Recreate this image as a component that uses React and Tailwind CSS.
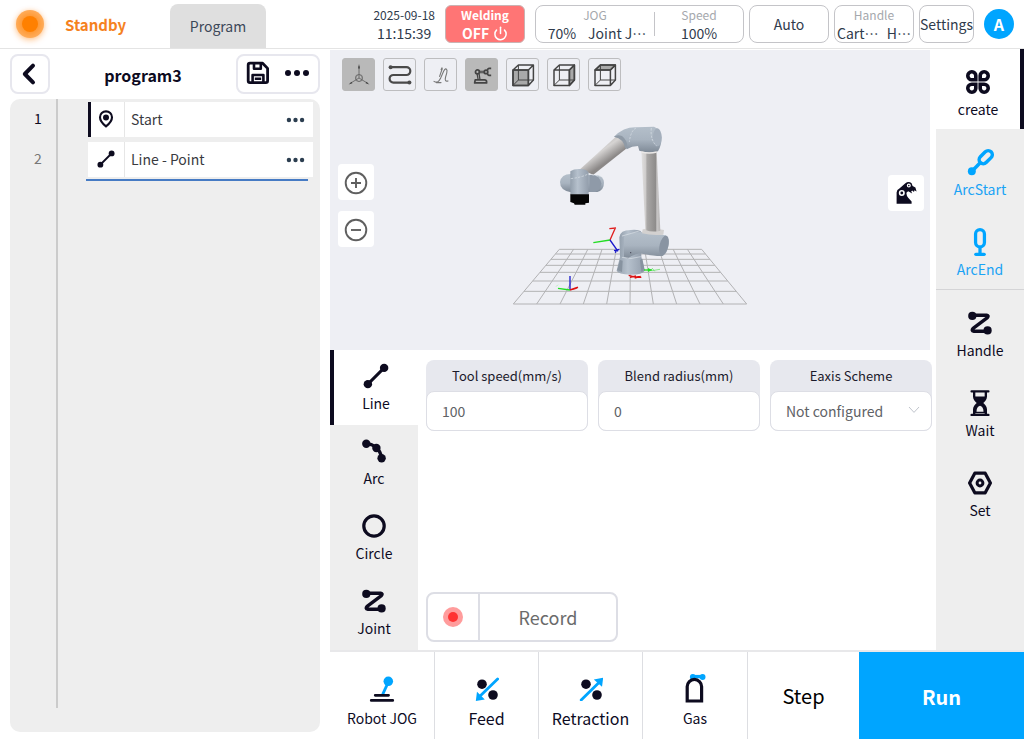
import { useState } from "react";
import clsx from "clsx";
import { Power } from "lucide-react";

const INK = "#0d0b1f";
const BLUE = "#00a5ff";

/* ---------- icons ---------- */

const Svg = ({ size = 24, children, ...rest }) => (
  <svg width={size} height={size} viewBox="0 0 24 24" fill="none" aria-hidden="true" {...rest}>
    {children}
  </svg>
);

const LineIcon = ({ size = 26 }) => (
  <Svg size={size}>
    <path d="M4.5 19.5 19.5 4.5" stroke={INK} strokeWidth="2.8" />
    <circle cx="4.5" cy="19.5" r="3.9" fill={INK} />
    <circle cx="19.5" cy="4.5" r="3.9" fill={INK} />
  </Svg>
);

const ArcIcon = () => (
  <Svg>
    <path d="M4.3 4.7C10 5 18 8 19.6 19.3" stroke={INK} strokeWidth="3.4" />
    <circle cx="4.3" cy="4.7" r="4.2" fill={INK} />
    <circle cx="14.4" cy="9" r="4.2" fill={INK} />
    <circle cx="19.6" cy="19.3" r="4.2" fill={INK} />
  </Svg>
);

const CircleIcon = () => (
  <Svg>
    <circle cx="12" cy="12" r="10.2" stroke={INK} strokeWidth="3.2" />
  </Svg>
);

const ZigzagIcon = () => (
  <Svg>
    <path
      d="M4.3 4.2H18.6Q21.2 4.8 19.4 6.7L5.1 17.4Q3 20 5.8 20.2H19.6"
      stroke={INK}
      strokeWidth="3.4"
      strokeLinejoin="round"
    />
    <circle cx="4.3" cy="4.9" r="4.1" fill={INK} />
    <circle cx="19.6" cy="19.4" r="4.1" fill={INK} />
  </Svg>
);

const CreateIcon = () => (
  <Svg stroke={INK} strokeWidth="3.6">
    <path d="M9.8 9.8V6A4 4 0 1 0 6 9.8Z" />
    <path d="M14.2 9.8V6A4 4 0 1 1 18 9.8Z" />
    <path d="M9.8 14.2V18A4 4 0 1 1 6 14.2Z" />
    <path d="M14.2 14.2V18A4 4 0 1 0 18 14.2Z" />
  </Svg>
);

const ArcStartIcon = () => (
  <Svg size={28} stroke={BLUE} strokeWidth="3">
    <rect x="10.4" y="4.4" width="13" height="7" rx="3.5" transform="rotate(-45 16.9 7.9)" />
    <path d="M12.4 12.4 5.5 19.5" />
    <circle cx="5" cy="20" r="3.4" fill={BLUE} stroke="none" />
  </Svg>
);

const ArcEndIcon = () => (
  <Svg size={28} stroke={BLUE} strokeWidth="2.8">
    <rect x="8.2" y="1.4" width="7.6" height="14.8" rx="3.8" />
    <path d="M12 16.2V22.4" />
    <path d="M8.4 22.6H15.6" strokeLinecap="round" />
  </Svg>
);

const WaitIcon = () => (
  <Svg size={28}>
    <path d="M4.8 2H19.2M4.8 22.2H19.2" stroke={INK} strokeWidth="2" strokeLinecap="round" />
    <path
      d="M7 2V6.6Q7.2 9.4 10.8 12Q7.2 14.6 7 17.4V22M17 2V6.6Q16.8 9.4 13.2 12Q16.8 14.6 17 17.4V22"
      stroke={INK}
      strokeWidth="2"
    />
    <path d="M7 6.4H17Q16.6 9.8 13 12H11Q7.4 9.8 7 6.4Z" fill={INK} />
    <path d="M7 18Q7.4 14.4 11 12H13Q16.6 14.4 17 18V20.8H7ZM12 14.4Q9 15.2 9 19.4H15Q15 15.2 12 14.4Z" fill={INK} fillRule="evenodd" />
  </Svg>
);

const SetIcon = () => (
  <Svg>
    <path d="M6.8 2.2H17.2L22.4 12 17.2 21.8H6.8L1.6 12Z" stroke={INK} strokeWidth="3.2" strokeLinejoin="round" />
    <circle cx="12" cy="12" r="2.9" stroke={INK} strokeWidth="3" />
  </Svg>
);

const JogIcon = () => (
  <Svg size={28}>
    <path d="M12.6 16.6 17 7" stroke={BLUE} strokeWidth="2.4" />
    <circle cx="17.4" cy="5.4" r="4.1" fill={BLUE} />
    <path d="M6.2 17.4H17.6M2.8 21.8H21.2" stroke={INK} strokeWidth="2.4" strokeLinecap="round" />
  </Svg>
);

const FeedIcon = ({ out }) => (
  <Svg>
    <circle cx="7" cy="7.2" r="4.8" fill={INK} />
    <circle cx="18" cy="18" r="4.8" fill={INK} />
    {out ? (
      <>
        <path d="M2.2 23 20 5.4" stroke={BLUE} strokeWidth="2.8" strokeLinecap="round" />
        <path d="M14.8 2.6 24.2.8 23 9.8Z" fill={BLUE} />
      </>
    ) : (
      <>
        <path d="M22.6 2 4.6 19.6" stroke={BLUE} strokeWidth="2.8" strokeLinecap="round" />
        <path d="M9.8 22.4.8 24 2 14.8Z" fill={BLUE} />
      </>
    )}
  </Svg>
);

const GasIcon = () => (
  <svg width="24" height="30" viewBox="0 0 24 30" fill="none" aria-hidden="true">
    <path d="M9 2.6H19.5" stroke={BLUE} strokeWidth="3.4" />
    <circle cx="9.8" cy="3" r="2.9" fill={BLUE} />
    <circle cx="19.6" cy="3" r="2.9" fill={BLUE} />
    <path d="M4.2 27V12.6A7.2 7.2 0 0 1 18.6 12.6V27Z" stroke={INK} strokeWidth="3.2" />
  </svg>
);

const BackIcon = () => (
  <Svg>
    <path d="M15 3.6 6.8 12 15 20.4" stroke={INK} strokeWidth="4" strokeLinecap="round" strokeLinejoin="round" />
  </Svg>
);

const SaveIcon = () => (
  <Svg stroke={INK} strokeWidth="2.8" strokeLinejoin="round">
    <path d="M4 2.2H16.6L21.6 7.4V19.8Q21.6 21.6 19.8 21.6H4Q2.2 21.6 2.2 19.8V4Q2.2 2.2 4 2.2Z" />
    <path d="M8 2.6V7.8H14.8V2.6" strokeWidth="2.6" />
    <path d="M6.6 21.4V14H17.4V21.4M8.8 17.8H15.2" strokeWidth="2.6" />
  </Svg>
);

const Dots = ({ color = INK, width = 26 }) => (
  <svg width={width} height="8" viewBox="0 0 26 8" fill={color} aria-hidden="true">
    <circle cx="4" cy="4" r="3" />
    <circle cx="13" cy="4" r="3" />
    <circle cx="22" cy="4" r="3" />
  </svg>
);

const PinIcon = () => (
  <Svg size={18}>
    <path d="M12 21.8Q4 15.6 4 9.6A8 7.8 0 0 1 20 9.6Q20 15.6 12 21.8Z" stroke={INK} strokeWidth="2.8" />
    <circle cx="12" cy="10" r="4" fill={INK} />
  </Svg>
);

const GripperIcon = () => (
  <Svg size={24}>
    <path
      fill={INK}
      fillRule="evenodd"
      d="M2.6 22.8V11.4Q2.8 8.6 5.4 7.4L11.4 2.2Q14.6-.4 17.6 2.2L18.6 5 21.4 6.4 22.6 10.4 20.4 9.2 20 11 18.2 9.6 17.2 10.6 18.2 12.6 14.2 10.2 12.6 11.4Q12 13.6 14.2 16.8L17.6 20.4V22.8ZM7.8 9A3 3 0 1 0 7.8 15 3 3 0 1 0 7.8 9ZM14.8 2.6A2 2 0 1 0 14.8 6.6 2 2 0 1 0 14.8 2.6Z"
    />
    <circle cx="7.8" cy="12" r="1.4" fill={INK} />
    <circle cx="14.8" cy="4.6" r=".8" fill={INK} />
  </Svg>
);

const AxesIcon = () => (
  <Svg stroke="#666" strokeWidth=".9">
    <path d="M12 15V3M12 15 3 20.5M12 15 21 20.5" />
    <circle cx="12" cy="15" r="3.6" strokeWidth=".7" />
    <path d="M12 11.4 15 13.2V16.8L12 18.6 9 16.8V13.2Z" strokeWidth=".6" />
    <path d="M12 1 13 5.6H11ZM1.6 21.4 4.6 18.8 5.4 20.2ZM22.4 21.4 19.4 18.8 18.6 20.2Z" fill="#444" stroke="none" />
  </Svg>
);

const PathIcon = () => (
  <Svg stroke="#4a4a4a" strokeWidth="2.2">
    <path d="M3 4.2H18.4A3.9 3.9 0 0 1 18.4 12H5.4A3.6 3.6 0 0 0 5.4 19.6H21" />
    <circle cx="2.6" cy="4.2" r="2" fill="#4a4a4a" stroke="none" />
    <circle cx="21.4" cy="19.6" r="2" fill="#4a4a4a" stroke="none" />
  </Svg>
);

const TraceIcon = () => (
  <Svg stroke="#777" strokeWidth="1.1" strokeLinecap="round">
    <path d="M5 18.4Q9 20.8 11.4 15.6L14.6 8.2Q17 4 18 7.4Q18.2 9.6 16.6 14Q15.2 19 19 18" />
    <path d="M13 6.4 10.6 13.4M7.4 19.6H12" />
    <path d="M13 5.2 12.4 6.6" strokeWidth="1.6" />
  </Svg>
);

const ArmIcon = () => (
  <Svg size={22} stroke="#444" strokeWidth="1.9" strokeLinejoin="round">
    <path d="M4.6 17.4H14.6Q17 17.4 17 19.4V20.6H4Z" />
    <path d="M7.8 17 6.6 10.4M9.8 17 8.8 10.4" strokeWidth="1.4" />
    <circle cx="7" cy="8.6" r="2.1" />
    <path d="M9.2 8H14.6M9.2 9.6H14.6" strokeWidth="1.1" />
    <circle cx="16.4" cy="8.6" r="1.9" />
    <path d="M22 4.8H19.6Q18 5.2 18 6.8M22 12.4H19.6Q18 12 18 10.4" />
  </Svg>
);

const CubeIcon = ({ face }) => (
  <svg width="26" height="26" viewBox="0 0 26 26" fill="none" stroke="#444" strokeWidth="1.5" strokeLinejoin="round" aria-hidden="true">
    {face === "front" && <path d="M3 8H18.4V23.4H3Z" fill="#a9a9a9" />}
    {face === "side" && <path d="M18.4 8 23.4 3V18L18.4 23.4Z" fill="#a9a9a9" />}
    {face === "top" && <path d="M3 8 8.4 3H23.4L18.4 8Z" fill="#a9a9a9" />}
    <path d="M3 8H18.4V23.4H3ZM3 8 8.4 3H23.4L18.4 8M23.4 3V18L18.4 23.4" />
    <path d="M8.4 3V18H23.4M8.4 18 3 23.4" strokeWidth="1" />
  </svg>
);

/* ---------- 3d scene ---------- */

const GRID_ROWS = [418, 432, 448, 466, 487, 513, 544, 582];
const GRID_COLS = Array.from({ length: 11 }, (_, i) => i);

// left and right edge of the floor at a given depth
const floorEdge = (y) => {
  const t = (y - 418) / 164;
  return [178 - 138 * t, 605 + 135 * t];
};

const RobotScene = () => (
  <svg className="block h-full w-full" viewBox="-510 -180 1800 900" role="img" aria-label="Robot view">
    <defs>
      <linearGradient id="upright" x1="0" x2="1">
        <stop offset="0" stopColor="#e2e1e1" />
        <stop offset=".22" stopColor="#cfcdcc" />
        <stop offset=".3" stopColor="#a9a7a6" />
        <stop offset=".75" stopColor="#8e8c8b" />
        <stop offset=".82" stopColor="#c8c6c6" />
        <stop offset="1" stopColor="#b5b3b3" />
      </linearGradient>
      <linearGradient id="boom" gradientUnits="userSpaceOnUse" x1="288" y1="110" x2="320" y2="156">
        <stop offset="0" stopColor="#bfbdbc" />
        <stop offset=".35" stopColor="#d6d4d3" />
        <stop offset="1" stopColor="#8b8887" />
      </linearGradient>
      <linearGradient id="joint" x1="0" y1="0" x2="0" y2="1">
        <stop offset="0" stopColor="#b4bfca" />
        <stop offset=".5" stopColor="#a9b4c0" />
        <stop offset="1" stopColor="#7f8a97" />
      </linearGradient>
      <linearGradient id="jointSide" x1="0" x2="1">
        <stop offset="0" stopColor="#939fac" />
        <stop offset=".4" stopColor="#b6c1cd" />
        <stop offset="1" stopColor="#929dab" />
      </linearGradient>
    </defs>

    {/* floor */}
    <g stroke="#b2b2b4" strokeWidth="3">
      {GRID_ROWS.map((y) => {
        const [left, right] = floorEdge(y);
        return <line key={y} x1={left} x2={right} y1={y} y2={y} />;
      })}
      {GRID_COLS.map((i) => (
        <line key={i} x1={178 + i * 42.7} y1="418" x2={40 + i * 70} y2="582" />
      ))}
    </g>

    {/* base */}
    <path d="M360 440H424L434 482Q428 494 392 494Q354 492 350 482Z" fill="url(#jointSide)" />
    <path d="M360 450 352 480 366 486 368 452ZM420 450 424 486 434 480 427 446Z" fill="#8793a0" />
    <path d="M358 382Q360 360 392 360Q420 358 424 366V440Q390 452 360 440Z" fill="url(#jointSide)" />
    <path d="M372 380Q396 366 424 366L470 372 496 376Q508 384 506 404Q502 430 488 438Q470 440 418 430Q394 436 384 446L372 440Z" fill="url(#joint)" />
    <ellipse cx="492" cy="406" rx="13" ry="30" transform="rotate(14 492 406)" fill="#8994a2" />
    <path d="M366 442Q392 450 422 440" stroke="#dce2e8" strokeWidth="2" fill="none" />
    <path d="M366 378Q396 370 420 362" stroke="#dce2e8" strokeWidth="2" fill="none" />
    <circle cx="392" cy="428" r="2" fill="#445" />

    {/* upright */}
    <path d="M428 358Q460 352 492 360L490 374Q458 378 426 370Z" fill="#d3d1d0" />
    <path d="M424 122H470L481 362Q458 368 436 360Z" fill="url(#upright)" />

    {/* boom */}
    <path d="M240 178 350 78Q378 82 384 112L280 194Z" fill="url(#boom)" />
    <path d="M342 80Q372 50 410 52L462 50Q484 58 485 84Q484 108 474 124Q444 130 418 122L414 108Q396 108 380 118Q382 88 342 80Z" fill="url(#joint)" />
    <path d="M342 80Q352 72 366 78Q384 92 382 114L376 116Q372 86 342 80Z" fill="#8f9aa6" />
    <ellipse cx="472" cy="82" rx="13" ry="27" fill="#a4afbc" />
    <path d="M408 54Q392 62 388 96M454 54Q450 90 470 108" stroke="#dce2e8" strokeWidth="2" strokeDasharray="7 4" fill="none" />
    <path d="M424 126Q448 132 470 126" stroke="#ebe9e8" strokeWidth="4" fill="none" />

    {/* wrist */}
    <path d="M212 192Q184 192 180 216Q180 240 210 246H292Q312 240 312 218Q310 198 292 196Z" fill="url(#joint)" />
    <path d="M274 194Q300 196 304 220Q302 240 286 246H268V196Z" fill="#8f9aa8" />
    <path d="M211 184Q222 176 240 177Q262 178 266 188V254H211Z" fill="url(#jointSide)" />
    <path d="M212 206Q246 202 264 192L306 200" stroke="#dce2e8" strokeWidth="2" strokeDasharray="7 4" fill="none" />
    <path d="M211 253H267V278L256 280V284H224L222 280 211 276Z" fill="#050505" />

    {/* axis markers */}
    <g fill="none" strokeWidth="4">
      <path d="M330 390 346 354M328 356 348 354" stroke="#e01e1e" />
      <path d="M330 390 280 398" stroke="#22dd22" />
      <path d="M330 390 354 424M342 422 358 418M346 428 350 418" stroke="#1a1acc" />
      <path d="M210 540V498" stroke="#1a1acc" />
      <path d="M210 540 174 535" stroke="#22dd22" />
      <path d="M210 540 234 532M218 538 230 534" stroke="#d11" strokeWidth="5" />
      <path d="M168 530 174 524" stroke="#a8e8a8" strokeWidth="2" />
      <path d="M432 480H456" stroke="#22dd22" />
      <path d="M444 474 456 480 444 486Z" fill="#22dd22" />
      <path d="M456 474 464 484M456 482 480 478" stroke="#55e055" strokeWidth="2" />
      <path d="M386 496 400 500 424 502M390 502 408 498M404 504 422 499" stroke="#d11" />
    </g>
  </svg>
);

/* ---------- data ---------- */

const VIEW_TOOLS = [
  { name: "Axes", icon: <AxesIcon />, on: true },
  { name: "Path", icon: <PathIcon /> },
  { name: "Trace", icon: <TraceIcon /> },
  { name: "Robot model", icon: <ArmIcon />, on: true },
  { name: "Front view", icon: <CubeIcon face="front" /> },
  { name: "Side view", icon: <CubeIcon face="side" /> },
  { name: "Top view", icon: <CubeIcon face="top" /> },
];

const MOTIONS = [
  { name: "Line", icon: <LineIcon /> },
  { name: "Arc", icon: <ArcIcon /> },
  { name: "Circle", icon: <CircleIcon /> },
  { name: "Joint", icon: <ZigzagIcon /> },
];

const RAIL = [
  { name: "create", icon: <CreateIcon /> },
  { name: "ArcStart", icon: <ArcStartIcon />, blue: true },
  { name: "ArcEnd", icon: <ArcEndIcon />, blue: true, divider: true },
  { name: "Handle", icon: <ZigzagIcon /> },
  { name: "Wait", icon: <WaitIcon /> },
  { name: "Set", icon: <SetIcon /> },
];

const ACTIONS = [
  { name: "Robot JOG", icon: <JogIcon />, text: "text-sm" },
  { name: "Feed", icon: <FeedIcon />, text: "text-base" },
  { name: "Retraction", icon: <FeedIcon out />, text: "text-base" },
  { name: "Gas", icon: <GasIcon />, text: "text-sm" },
];

const STEPS = [
  { name: "Start", icon: <PinIcon />, current: true },
  { name: "Line - Point", icon: <LineIcon size={18} /> },
];

/* ---------- sections ---------- */

// the JP cut of the font sets the ellipsis at mid height
const boxStyle =
  "h-[38px] rounded-lg border border-[#c4c4c8] bg-white text-sm whitespace-nowrap text-[#2f3b4c] font-['Noto_Sans_CJK_JP','Noto_Sans',sans-serif]";

const Header = () => (
  <header className="flex h-[49px] shrink-0 items-center border-b border-[#e4e4e4]">
    <div className="ml-4 flex h-7 w-7 items-center justify-center rounded-full bg-[#ffb061] shadow-[0_2px_6px_rgba(255,128,0,0.4)]">
      <span className="h-4 w-4 rounded-full bg-[#ff8000] shadow-[0_0_6px_3px_rgba(255,128,0,0.55)]" />
    </div>
    <span className="ml-5 w-[106px] pt-0.5 pl-px text-[15px] font-bold text-[#f5821f]">Standby</span>
    <button className="h-11 w-24 self-end rounded-t-lg bg-[#dfdfdf] text-sm text-[#3c4858]">Program</button>

    <div className="ml-auto flex items-center gap-[5px] pr-[10px]">
      <div className="mr-[5px] text-center text-[#2f3b4c]">
        <div className="text-xs leading-[18px]">2025-09-18</div>
        <div className="text-sm leading-[18px]">11:15:39</div>
      </div>
      <button className="mr-[5px] flex h-[38px] w-20 flex-col items-center justify-center rounded-md border border-[#c9b3b3] bg-[#ff7575] font-bold text-white">
        <span className="text-xs leading-[18px]">Welding</span>
        <span className="flex items-center gap-1 text-sm leading-[18px]">
          OFF <Power size={15} strokeWidth={2.4} />
        </span>
      </button>
      <div className={clsx(boxStyle, "flex w-[209px] items-center text-center leading-[18px]")}>
        <button className="w-[118px]">
          <div className="text-xs leading-[18px] text-[#a5a8ad]">JOG</div>
          <div className="flex justify-center gap-3 pl-1">
            <span>70%</span>
            <span lang="ja">Joint J…</span>
          </div>
        </button>
        <div className="h-6 border-l border-[#c4c4c8]" />
        <button className="flex-1">
          <div className="text-xs leading-[18px] text-[#a5a8ad]">Speed</div>
          <div>100%</div>
        </button>
      </div>
      <button className={clsx(boxStyle, "w-20")}>Auto</button>
      <button className={clsx(boxStyle, "w-20 leading-[18px]")}>
        <div className="text-xs leading-[18px] text-[#a5a8ad]">Handle</div>
        <div className="flex justify-between px-0.5" lang="ja">
          <span>Cart…</span>
          <span>H…</span>
        </div>
      </button>
      <button className={clsx(boxStyle, "flex w-[55px] items-center justify-center")}>Settings</button>
      <button className="ml-[5px] h-[30px] w-[30px] rounded-full bg-[#00a5ff] text-base font-bold text-white">A</button>
    </div>
  </header>
);

const ProgramPanel = () => (
  <aside className="flex w-[330px] shrink-0 flex-col px-[10px] pt-[5px] pb-[7px]">
    <div className="flex h-10 shrink-0 items-center justify-between">
      <button aria-label="Back" className="flex h-10 w-10 items-center justify-center rounded-lg border-2 border-[#e7e7ee]">
        <BackIcon />
      </button>
      <h1 className="pt-0.5 text-base font-bold text-[#0d0b1f]">program3</h1>
      <div className="flex h-10 items-center gap-[14px] rounded-lg border-2 border-[#e7e7ee] px-2 pb-0.5">
        <button aria-label="Save"><SaveIcon /></button>
        <button aria-label="More"><Dots /></button>
      </div>
    </div>

    <div className="mt-[5px] flex flex-1 rounded-[10px] bg-[#eeeeee] pr-[7px]">
      <div className="mb-6 w-12 border-r-2 border-[#cbcbcb] pt-[3px] pl-[10px] text-center text-sm">
        <div className="h-[35px] leading-[33px] text-[#0d0b1f]">1</div>
        <div className="mt-[5px] h-[35px] leading-[33px] text-[#777]">2</div>
      </div>
      <div className="ml-7 flex-1 pt-[3px]">
        <ol className="ml-0.5 flex flex-col gap-[5px]">
          {STEPS.map((step) => (
            <li
              key={step.name}
              className={clsx("flex h-[35px] items-center bg-white", step.current && "border-l-3 border-[#0d0b1f]")}
            >
              <span
                className={clsx(
                  "flex h-full items-center justify-center border-r border-[#e6e6e6] pb-px",
                  step.current ? "w-[34px] pr-[3px]" : "w-[37px]"
                )}
              >
                {step.icon}
              </span>
              <span className="flex-1 pb-0.5 pl-1.5 text-sm text-[#3a3a3f]">{step.name}</span>
              <button aria-label={`${step.name} options`} className="mr-2">
                <Dots color="#2c3e50" width={19} />
              </button>
            </li>
          ))}
        </ol>
        <div className="mt-0.5 mr-[5px] h-0.5 bg-[#467bc4]" />
      </div>
    </div>
  </aside>
);

const roundTile = "flex h-9 w-9 items-center justify-center rounded bg-white";

const Viewport = () => (
  <div className="relative mt-px mr-1.5 min-h-0 flex-1 bg-[#eeeff4]">
    <RobotScene />
    <div className="absolute top-2 left-3 flex gap-2">
      {VIEW_TOOLS.map((tool) => (
        <button
          key={tool.name}
          aria-label={tool.name}
          className={clsx(
            "flex h-[33px] w-[33px] items-center justify-center rounded-[3px] border pt-px",
            tool.on ? "border-[#b9b9b9] bg-[#b9b9b9]" : "border-[#bdbdbf]"
          )}
        >
          {tool.icon}
        </button>
      ))}
    </div>
    <div className="absolute top-[114px] left-2 flex flex-col gap-[11px]">
      {["M7 12H17M12 7V17", "M7 12H17"].map((d, i) => (
        <button key={d} aria-label={i ? "Zoom out" : "Zoom in"} className={clsx(roundTile, "pt-0.5")}>
          <Svg stroke="#5f5f5f" strokeWidth="1.9">
            <circle cx="12" cy="12" r="10.3" />
            <path d={d} />
          </Svg>
        </button>
      ))}
    </div>
    <button aria-label="Robot pose" className={clsx(roundTile, "absolute top-[125px] right-1.5")}>
      <GripperIcon />
    </button>
  </div>
);

const Field = ({ id, label, children }) => (
  <div className="h-[71px] flex-1 rounded-lg bg-[#e7e8ee]">
    <label htmlFor={id} className="block h-[31px] text-center text-[13px] leading-[31px] text-[#1b1a2b]">
      {label}
    </label>
    <div className="relative">{children}</div>
  </div>
);

const inputStyle = "block h-10 w-full appearance-none rounded-lg border border-[#dddee5] bg-white px-[15px] text-sm text-[#606266] outline-none";

const MotionEditor = () => {
  const [motion, setMotion] = useState("Line");

  return (
    <div className="flex h-[300px] shrink-0">
      <nav className="w-[88px] bg-[#eeeeee]">
        {MOTIONS.map((m) => (
          <button
            key={m.name}
            onClick={() => setMotion(m.name)}
            className={clsx(
              "flex h-[75px] w-full flex-col items-center pt-[13px] text-[#0d0b1f]",
              m.name === motion && "border-l-4 border-[#0d0b1f] bg-white"
            )}
          >
            <span className="flex h-[26px] items-center">{m.icon}</span>
            <span className="mt-1 text-sm leading-5">{m.name}</span>
          </button>
        ))}
      </nav>
      <div className="flex flex-1 flex-col justify-between pt-[10px] pr-1 pb-2 pl-2">
        <div className="flex gap-[10px]">
          <Field id="speed" label="Tool speed(mm/s)">
            <input id="speed" defaultValue="100" className={inputStyle} />
          </Field>
          <Field id="radius" label="Blend radius(mm)">
            <input id="radius" defaultValue="0" className={inputStyle} />
          </Field>
          <Field id="scheme" label="Eaxis Scheme">
            <select id="scheme" className={inputStyle}>
              <option>Not configured</option>
            </select>
            <svg className="pointer-events-none absolute top-[15px] right-3 h-2 w-3" viewBox="0 0 12 8" fill="none" stroke="#c0c4cc" aria-hidden="true">
              <path d="M1 1 6 6.4 11 1" />
            </svg>
          </Field>
        </div>
        <button className="flex h-[50px] w-48 rounded-lg border-2 border-[#dddee5] text-lg text-[#6b6b6b]">
          <span className="flex h-full w-[52px] items-center justify-center border-r-2 border-[#dddee5]">
            <span className="flex h-5 w-5 items-center justify-center rounded-full bg-[#ff9c9c]">
              <span className="h-[10px] w-[10px] rounded-full bg-[#ff3333]" />
            </span>
          </span>
          <span className="flex-1 self-center">Record</span>
        </button>
      </div>
    </div>
  );
};

const SideRail = () => {
  const [active, setActive] = useState("create");

  return (
    <nav className="w-[88px] shrink-0 bg-[#eeeeee]">
      {RAIL.map((item) => (
        <button
          key={item.name}
          onClick={() => setActive(item.name)}
          className={clsx(
            "flex w-full flex-col items-center pt-[19px] text-sm",
            item.divider ? "h-[81px] border-b border-[#d4d4d6]" : "h-20",
            item.blue ? "text-[#1aa3f5]" : "text-[#0d0b1f]",
            item.name === active && "border-r-4 border-[#0d0b1f] bg-white"
          )}
        >
          <span className="flex h-[28px] items-center">{item.icon}</span>
          <span className="mt-[3px] leading-5">{item.name}</span>
        </button>
      ))}
    </nav>
  );
};

const ActionBar = () => (
  <footer className="grid h-[89px] shrink-0 grid-cols-[105fr_104fr_104fr_105fr_111fr_165fr] border-t-2 border-[#e8e8ea] text-[#0d0b1f]">
    {ACTIONS.map((action) => (
      <button key={action.name} className="flex flex-col items-center justify-end border-r border-[#dddee2] pb-[9px]">
        <span className="flex h-[30px] items-center">{action.icon}</span>
        <span className={clsx("mt-[2px] leading-6", action.text)}>{action.name}</span>
      </button>
    ))}
    <button className="text-xl text-black">Step</button>
    <button className="bg-[#00a5ff] pt-0.5 text-xl font-bold text-white">Run</button>
  </footer>
);

export default function App() {
  return (
    <div className="flex h-screen flex-col overflow-hidden bg-white font-['Noto_Sans_CJK_SC','Noto_Sans',sans-serif]">
      <Header />
      <div className="flex min-h-0 flex-1">
        <ProgramPanel />
        <section className="flex min-w-0 flex-1 flex-col">
          <div className="flex min-h-0 flex-1">
            <main className="flex min-w-0 flex-1 flex-col">
              <Viewport />
              <MotionEditor />
            </main>
            <SideRail />
          </div>
          <ActionBar />
        </section>
      </div>
    </div>
  );
}
